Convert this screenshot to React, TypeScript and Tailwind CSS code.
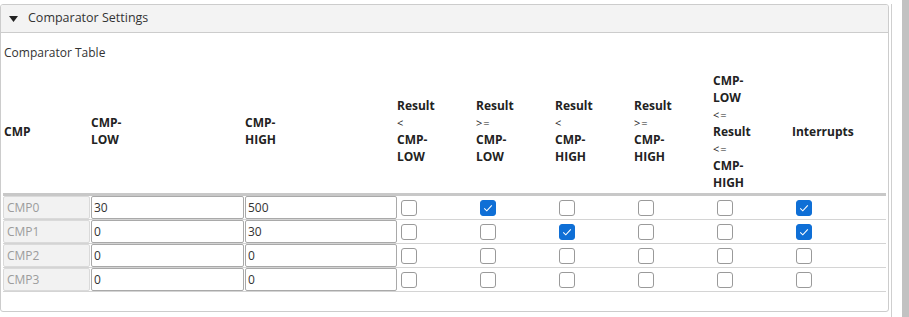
import { useState } from 'react'

type Row = { name: string; low: string; high: string; flags: boolean[] }

const initialRows: Row[] = [
  { name: 'CMP0', low: '30', high: '500', flags: [false, true, false, false, false, true] },
  { name: 'CMP1', low: '0', high: '30', flags: [false, false, true, false, false, true] },
  { name: 'CMP2', low: '0', high: '0', flags: [false, false, false, false, false, false] },
  { name: 'CMP3', low: '0', high: '0', flags: [false, false, false, false, false, false] },
]

const flagHeaders: string[][] = [
  ['Result', '<', 'CMP-', 'LOW'],
  ['Result', '>=', 'CMP-', 'LOW'],
  ['Result', '<', 'CMP-', 'HIGH'],
  ['Result', '>=', 'CMP-', 'HIGH'],
  ['CMP-', 'LOW', '<=', 'Result', '<=', 'CMP-', 'HIGH'],
  ['Interrupts'],
]

const cols = 'grid grid-cols-[87px_154px_153px_79px_79px_79px_79px_79px_87px]'

function Check({ checked, onClick }: { checked: boolean; onClick: () => void }) {
  return (
    <button
      onClick={onClick}
      className={`w-4 h-4 rounded-[3px] border flex items-center justify-center ${
        checked ? 'bg-[#0f6fd6] border-[#0f6fd6]' : 'bg-white border-[#9a9a9a]'
      }`}
    >
      {checked && (
        <svg width="12" height="12" viewBox="0 0 12 12">
          <polyline points="2.2,6.4 4.8,8.8 9.8,3.4" fill="none" stroke="white" strokeWidth="1.1" />
        </svg>
      )}
    </button>
  )
}

export default function App() {
  const [rows, setRows] = useState(initialRows)
  const [open, setOpen] = useState(true)

  const toggle = (r: number, f: number) =>
    setRows((prev) =>
      prev.map((row, i) => (i === r ? { ...row, flags: row.flags.map((v, j) => (j === f ? !v : v)) } : row))
    )

  const setVal = (r: number, key: 'low' | 'high', v: string) =>
    setRows((prev) => prev.map((row, i) => (i === r ? { ...row, [key]: v } : row)))

  return (
    <div className="w-[909px] h-[317px] bg-white flex font-['Open_Sans','Noto_Sans',sans-serif] text-[12px] text-[#333] overflow-hidden">
      <div className="w-[902px] shrink-0">
        <div className="w-[892px] h-[315px] border-r border-b border-[#cfcfcf]">
          <div className="w-[889px] h-[308px] mt-[4px] border border-[#cccccc] rounded-[3px] overflow-hidden">
            <div
              className="h-[28px] bg-[#f3f3f3] border-b border-[#cccccc] flex items-center pl-[8px] cursor-pointer"
              onClick={() => setOpen(!open)}
            >
              <svg width="9" height="6" viewBox="0 0 9 6" className="mr-[10px] mt-[1px]">
                <polygon points="0,0 9,0 4.5,6" fill="#222" />
              </svg>
              <span className="text-[12.5px] text-[#333]">Comparator Settings</span>
            </div>
            {open && (
              <div className="px-[2px]">
                <div className="pt-[12px] pl-[1px] h-[36px] text-[12px] text-[#333] leading-[16px]">Comparator Table</div>
                <div className={`${cols} h-[127px] items-center font-bold text-[#222] text-[12px] leading-[17px] border-b-[3px] border-[#c8c8c8]`}>
                  <div className="pl-[1px]">CMP</div>
                  <div className="pl-[1px]">
                    <div>CMP-</div>
                    <div>LOW</div>
                  </div>
                  <div className="pl-[1px]">
                    <div>CMP-</div>
                    <div>HIGH</div>
                  </div>
                  {flagHeaders.map((lines, i) => (
                    <div key={i}>
                      {lines.map((l, j) => (
                        <div key={j} className={l.includes('<') || l.includes('>') ? 'font-normal text-[11px] tracking-[1px]' : ''}>
                          {l}
                        </div>
                      ))}
                    </div>
                  ))}
                </div>
                {rows.map((row, r) => (
                  <div key={row.name} className={`${cols} h-[24px] items-center border-b border-[#d4d4d4]`}>
                    <div className="h-[23px] bg-[#f2f2f2] border border-[#dadada] rounded-[2px] text-[#9c9c9c] pl-[3px] flex items-center">
                      {row.name}
                    </div>
                    <input
                      value={row.low}
                      onChange={(e) => setVal(r, 'low', e.target.value)}
                      className="h-[23px] ml-[1px] border border-[#a9a9a9] rounded-[2px] px-[2px] text-[12px] text-[#333] outline-none"
                    />
                    <input
                      value={row.high}
                      onChange={(e) => setVal(r, 'high', e.target.value)}
                      className="h-[23px] ml-[1px] border border-[#a9a9a9] rounded-[2px] px-[2px] text-[12px] text-[#333] outline-none"
                    />
                    {row.flags.map((f, j) => (
                      <div key={j} className="pl-[4px] flex items-center">
                        <Check checked={f} onClick={() => toggle(r, j)} />
                      </div>
                    ))}
                  </div>
                ))}
              </div>
            )}
          </div>
        </div>
      </div>
      <div className="w-[7px] h-full bg-[#c2c2c2]" />
    </div>
  )
}
